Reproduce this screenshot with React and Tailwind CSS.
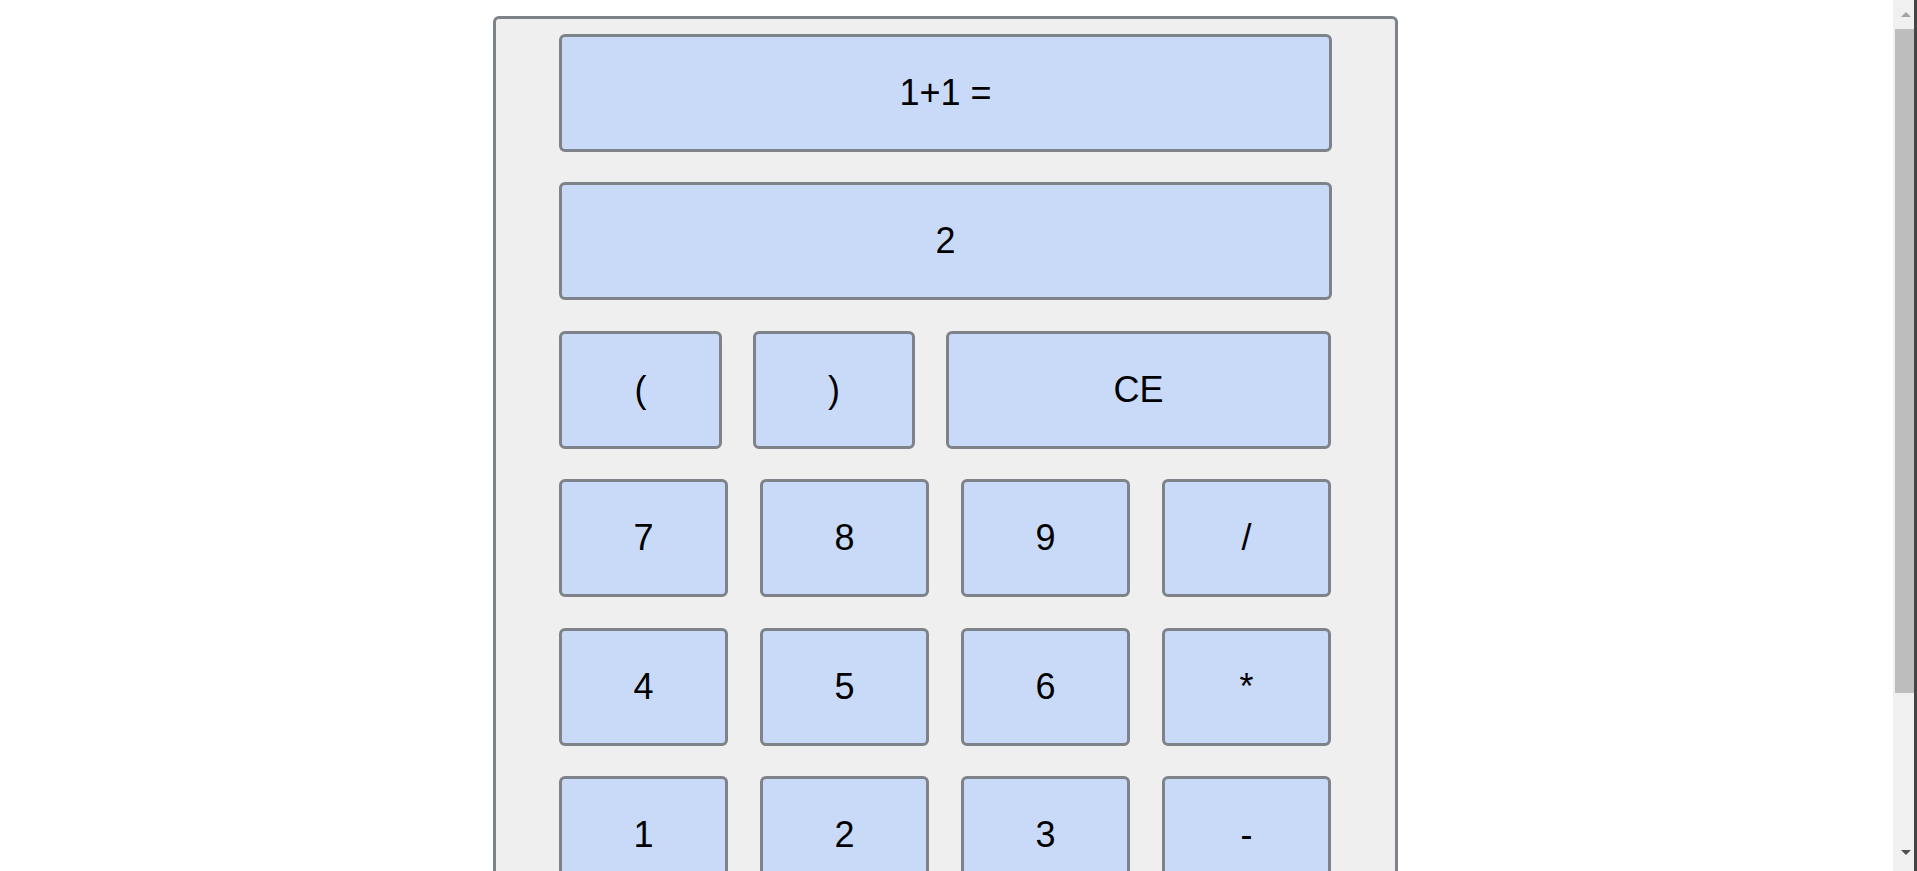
import React from "react";

const box =
  "flex items-center justify-center h-[118px] border-[3px] border-[#7d8388] rounded-[6px] bg-[#c9daf8] text-black text-[36px] leading-none";

function FakeScrollbar() {
  return (
    <div className="fixed top-0 right-0 h-screen w-[24px] flex">
      <div className="relative w-[21px] h-full bg-[#f0f0f0]">
        <div className="absolute left-[8px] top-[12px] w-0 h-0 border-l-[5px] border-r-[5px] border-b-[5px] border-l-transparent border-r-transparent border-b-[#a3a3a3]" />
        <div className="absolute left-[2px] right-0 top-[29px] h-[664px] bg-[#bdbdbd]" />
        <div className="absolute left-[8px] bottom-[16px] w-0 h-0 border-l-[5px] border-r-[5px] border-t-[5px] border-l-transparent border-r-transparent border-t-[#505050]" />
      </div>
      <div className="w-[3px] h-full bg-[#444444]" />
    </div>
  );
}

export default function App() {
  const rows = [
    ["7", "8", "9", "/"],
    ["4", "5", "6", "*"],
    ["1", "2", "3", "-"],
    ["0", ".", "=", "+"],
  ];
  return (
    <div
      className="min-h-screen bg-white pt-[16px] pb-[16px]"
      style={{ fontFamily: '"Liberation Sans", Arial, sans-serif' }}
    >
      <div className="ml-[493px] w-[905px] border-[3px] border-[#7d8388] rounded-[6px] bg-[#efefef] pl-[63px] pr-[63px] pt-[15px] pb-[16px] flex flex-col gap-[30.4px]">
        <div className={box + " w-[773px]"}>1+1 =</div>
        <div className={box + " w-[773px]"}>2</div>
        <div className="flex gap-[31px]">
          <div className={box + " w-[163px]"}>(</div>
          <div className={box + " w-[162px]"}>)</div>
          <div className={box + " w-[385px]"}>CE</div>
        </div>
        {rows.map((r, i) => (
          <div key={i} className="flex gap-[32px]">
            {r.map((k) => (
              <div key={k} className={box + " w-[169px]"}>
                {k}
              </div>
            ))}
          </div>
        ))}
      </div>
      <FakeScrollbar />
    </div>
  );
}
